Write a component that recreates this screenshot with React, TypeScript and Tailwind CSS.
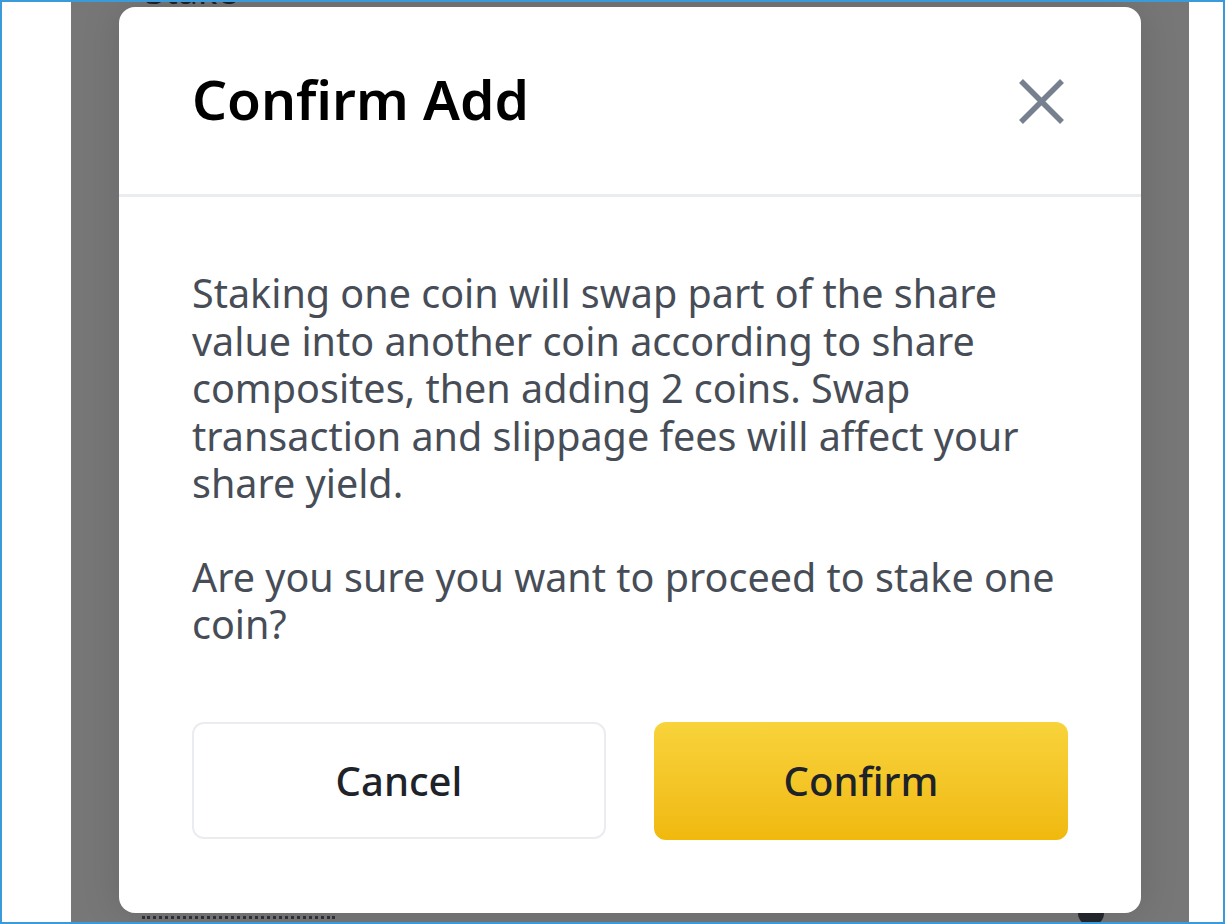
const font = { fontFamily: '"Noto Sans", "Open Sans", sans-serif' };

function Modal() {
  return (
    <div className="relative z-10 flex h-[906px] w-[1022px] flex-col rounded-[16px] bg-white shadow-[0_0_40px_rgba(0,0,0,0.12)]">
      <div className="flex h-[190px] shrink-0 items-center justify-between border-b-[3px] border-[#eaecef] pl-[73px] pr-[74px]">
        <h2 className="pb-[4px] text-[55px] font-semibold leading-none text-[#000]">Confirm Add</h2>
        <button type="button" aria-label="Close" className="flex h-[52px] w-[52px] items-center justify-center">
          <svg width="52" height="52" viewBox="0 0 52 52" fill="none">
            <path d="M6 6L47 47M47 6L6 47" stroke="#76808f" strokeWidth="5.5" />
          </svg>
        </button>
      </div>
      <div className="flex flex-1 flex-col px-[73px] pt-[73px] pb-[73px]">
        <p className="text-[39.5px] leading-[47.5px] text-[#474d57]">
          Staking one coin will swap part of the share value into another coin according to share
          composites, then adding 2 coins. Swap transaction and slippage fees will affect your
          share yield.
        </p>
        <p className="mt-[46px] text-[39.5px] leading-[47.5px] text-[#474d57]">
          Are you sure you want to proceed to stake one coin?
        </p>
        <div className="mt-auto grid grid-cols-2 gap-[48px]">
          <button
            type="button"
            className="h-[117px] rounded-[12px] border-[2px] border-[#eaecef] bg-white text-[40px] font-medium text-[#1e2329]"
          >
            Cancel
          </button>
          <button
            type="button"
            className="h-[118px] rounded-[12px] bg-gradient-to-b from-[#f8d33a] to-[#f0b90b] text-[40px] font-medium text-[#1e2329]"
          >
            Confirm
          </button>
        </div>
      </div>
    </div>
  );
}

export default function App() {
  return (
    <div style={font} className="flex h-[924px] w-[1225px] overflow-hidden border-2 border-[#3b9ad9] bg-white">
      <div className="w-[69px] shrink-0" />
      <div className="relative flex w-[1118px] shrink-0 flex-col bg-[#777777] pl-[48px] pt-[5px]">
        <span className="absolute left-[74px] top-[-38px] text-[36px] text-[#1c1f24]">Stake</span>
        <div className="absolute left-[71px] top-[914px] w-[193px] border-b-[3px] border-dotted border-[#2f3238]" />
        <div className="absolute left-[1007px] top-[898px] h-[26px] w-[26px] rounded-full bg-[#24272c]" />
        <Modal />
      </div>
    </div>
  );
}
